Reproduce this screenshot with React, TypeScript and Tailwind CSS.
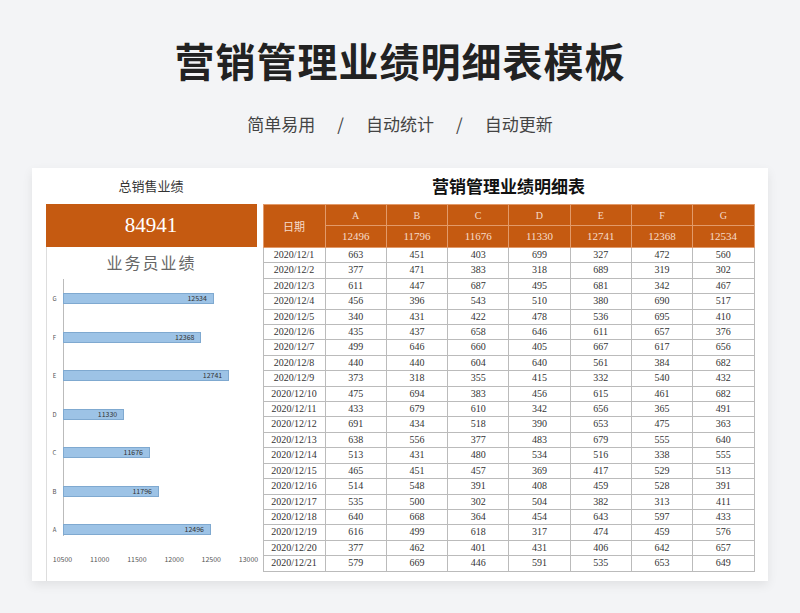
const rows: number[][] = [
[663,451,403,699,327,472,560],[377,471,383,318,689,319,302],[611,447,687,495,681,342,467],[456,396,543,510,380,690,517],
[340,431,422,478,536,695,410],[435,437,658,646,611,657,376],[499,646,660,405,667,617,656],[440,440,604,640,561,384,682],
[373,318,355,415,332,540,432],[475,694,383,456,615,461,682],[433,679,610,342,656,365,491],[691,434,518,390,653,475,363],
[638,556,377,483,679,555,640],[513,431,480,534,516,338,555],[465,451,457,369,417,529,513],[514,548,391,408,459,528,391],
[535,500,302,504,382,313,411],[640,668,364,454,643,597,433],[616,499,618,317,474,459,576],[377,462,401,431,406,642,657],[579,669,446,591,535,653,649]];
const letters=['A','B','C','D','E','F','G'];
const totals=[12496,11796,11676,11330,12741,12368,12534];
const serif={fontFamily:'"Liberation Serif","Noto Sans CJK SC",serif'};
const sans={fontFamily:'"Noto Sans CJK SC","Noto Sans",sans-serif'};
export default function App(){
  const bars=[...letters.map((l,i)=>({l,v:totals[i]}))].reverse();
  return <div className="w-[800px] h-[613px] bg-[#f3f4f6] overflow-hidden flex flex-col items-center" style={sans}>
    <div className="mt-[33px] text-[40px] font-bold text-[#222] leading-[54px] tracking-[1px]">营销管理业绩明细表模板</div>
    <div className="mt-[25px] flex gap-[22px] text-[17px] text-[#444] leading-[24px]"><span>简单易用</span><span>/</span><span>自动统计</span><span>/</span><span>自动更新</span></div>
    <div className="mt-[32px] w-[736px] ml-[-1px] h-[413px] shrink-0 bg-white shadow-[0_4px_10px_rgba(0,0,0,0.08)] flex gap-[6px] pl-[14px] overflow-hidden">
      <div className="w-[211px] flex flex-col">
        <div className="h-[36px] flex items-center justify-center text-[13px] text-[#333]" style={sans}>总销售业绩</div>
        <div className="h-[43px] bg-[#c55a11] flex items-center justify-center text-white text-[21px]" style={serif}>84941</div>
        <div className="flex-1 border-l border-[#ddd] relative">
          <div className="text-center text-[16px] text-[#666] mt-[3px] tracking-[2px]">业务员业绩</div>
          <div className="absolute left-[16px] top-[32px] w-px h-[257px] bg-[#bbb]"></div>
          {bars.map((b,i)=>{const w=(b.v-10500)/500*37.2;return <div key={b.l} className="absolute left-0 flex items-center" style={{top:46+i*38.5}}>
            <span className="w-[16px] text-[6px] text-[#555] text-center">{b.l}</span>
            <div className="h-[11px] bg-[#9dc3e6] border border-[#7fa9d0] flex items-center justify-end pr-[6px] text-[7px] text-[#333]" style={{width:w}}>{b.v}</div>
          </div>})}
          <div className="absolute top-[307px] left-0 w-[212px] text-[7px] text-[#555]">
            {[10500,11000,11500,12000,12500,13000].map((t,i)=><span key={t} className="absolute -translate-x-1/2" style={{left:16+i*37.2}}>{t}</span>)}
          </div>
        </div>
      </div>
      <div className="w-[492px] flex flex-col">
        <div className="h-[36px] flex items-center justify-center text-[17px] font-bold text-[#111]">营销管理业绩明细表</div>
        <table className="border-collapse w-[492px] table-fixed text-[10px]" style={serif}>
          <colgroup><col className="w-[62px]"/>{letters.map(l=><col key={l}/>)}</colgroup>
          <thead className="bg-[#c55a11] text-[#f6dccb]">
            <tr className="h-[21px]"><td rowSpan={2} className="border border-[#e29a6a] text-center text-[11px]" style={sans}>日期</td>{letters.map(l=><td key={l} className="border border-[#e29a6a] text-center">{l}</td>)}</tr>
            <tr className="h-[22px]">{totals.map(t=><td key={t} className="border border-[#e29a6a] text-center text-[11px]">{t}</td>)}</tr>
          </thead>
          <tbody className="text-[#333]">
            {rows.map((r,i)=><tr key={i} className="h-[15.4px]"><td className="border border-[#bbb] text-center leading-[14.4px]">2020/12/{i+1}</td>{r.map((v,j)=><td key={j} className="border border-[#bbb] text-center leading-[14.4px]">{v}</td>)}</tr>)}
          </tbody>
        </table>
      </div>
    </div>
  </div>
}
